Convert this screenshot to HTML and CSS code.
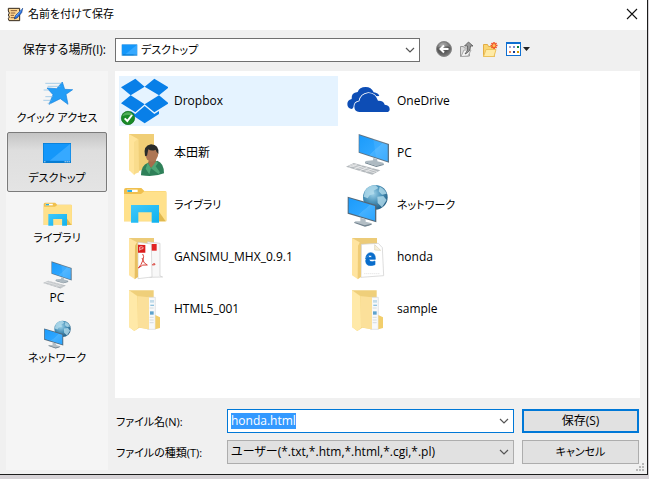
FILE: index.html
```html
<!DOCTYPE html>
<html lang="ja">
<head>
<meta charset="utf-8">
<title>名前を付けて保存</title>
<link rel="stylesheet" href="styles.css">
</head>
<body>
<svg class="defs" aria-hidden="true">
  <defs>
    <linearGradient id="blue" x1="0" y1="0" x2="1" y2="1">
      <stop offset="0" stop-color="#1b9bfb"/><stop offset=".55" stop-color="#2ea6ff"/><stop offset=".56" stop-color="#45b1ff"/><stop offset="1" stop-color="#2ba5ff"/>
    </linearGradient>
    <linearGradient id="yellow" x1="0" y1="0" x2="1" y2="0">
      <stop offset="0" stop-color="#f3d27b"/><stop offset="1" stop-color="#fde9a6"/>
    </linearGradient>
    <linearGradient id="cyan" x1="0" y1="0" x2="1" y2="1">
      <stop offset="0" stop-color="#41c8fa"/><stop offset="1" stop-color="#0fb2ee"/>
    </linearGradient>
    <radialGradient id="globe" cx=".4" cy=".35" r=".7">
      <stop offset="0" stop-color="#9fd3ea"/><stop offset=".5" stop-color="#4b93ba"/><stop offset="1" stop-color="#20597f"/>
    </radialGradient>
    <radialGradient id="grey" cx=".4" cy=".3" r=".8">
      <stop offset="0" stop-color="#999"/><stop offset=".5" stop-color="#555"/><stop offset="1" stop-color="#888"/>
    </radialGradient>
    <symbol id="i-pc" viewBox="9 177 144 144">
      <path d="M56 192l91 30v56l-91-30z" fill="#5e7486"/>
      <path d="M58 196l85 28v50l-85-28z" fill="url(#blue)"/>
      <path d="M98 196v0l45 28v50l-35-12z" fill="#fff" opacity=".08"/>
      <path d="M100 264l12 4v6l18 4 2 5-22 5-35-11 2-4 22-2z" fill="#aebac2"/>
      <path d="M75 277l34 11 22-6v3l-22 6-34-11z" fill="#728490"/>
      <path d="M41 279l80 22-24 13-79-24z" fill="#b4b9bd"/>
      <path d="M34 283l78 22M28 286l77 23M52 282l-26 10M67 287l-26 11M83 291l-25 12M98 295l-24 13" fill="none" stroke="#f4f4f4" stroke-width="2"/>
    </symbol>
    <symbol id="i-network" viewBox="9 3 144 144">
      <circle cx="106" cy="52" r="37" fill="url(#globe)"/>
      <path d="M75 32q14-18 32-16l8 8-14 8 2 10-14 4-6 9-12-5zM119 20q16 7 21 21l-14 3-10-10zM112 50l18-2 10 12-14 22-13-13z" fill="#b3dcec" opacity=".8"/>
      <path d="M23 50l86 25v52L23 101z" fill="#536879"/>
      <path d="M26 54l79 24v44L26 98z" fill="url(#blue)"/>
      <path d="M61 113l16 5v7l19 5-10 8-13 1-30-12 3-3h15z" fill="#b3bec5"/>
      <path d="M43 126l31 10 21-5v3l-20 6-32-11z" fill="#72838f"/>
    </symbol>
    <symbol id="i-library" viewBox="24 3 144 144">
      <path d="M36 31q0-7 6-7h46l9 9h62q4 0 4 5v86H36z" fill="#f0c04e"/>
      <path d="M45 29h32v7H45z" fill="#fff"/><path d="M46 30h14v6H46z" fill="#27aee8"/>
      <path d="M36 42h51l10-8h66v86q0 4-5 4H36z" fill="#ffe18b"/>
      <path d="M141 95l20 29h-20z" fill="#dfb850"/>
      <path d="M57 75h84v53h-22V97H79v31H57z" fill="url(#cyan)"/>
    </symbol>
    <symbol id="i-desktop" viewBox="130 223 88 64">
      <path d="M132 225h84v60h-84z" fill="#087dd2"/>
      <path d="M134 227h80v51h-80z" fill="#1497fa"/><path d="M214 227v51h-62z" fill="#36a9ff"/>
      <path d="M136 280h3v3h-3zM197 280h3v3h-3zM203 280h3v3h-3zM209 280h3v3h-3z" fill="#fff"/>
    </symbol>
    <symbol id="i-papers" viewBox="24 315 144 144">
      <path d="M51 331h74v110H67z" fill="#efcf7a"/>
      <path d="M106 352h24v96h-24z" fill="#f7f9fa" stroke="#d5dadd" stroke-width="2"/>
      <path d="M114 360h12v8h-12z" fill="#c3dcea"/><path d="M115 374h11v4h-11z" fill="#8fc1de"/><path d="M114 394h11v10h-11z" fill="#5fa3cd"/><path d="M113 412h12m-12 8h12m-12 8h12m-12-44h12" stroke="#c6ccd0" stroke-width="2"/>
      <path d="M130 405l14 7v32l-14 4z" fill="#f2ce6c"/>
      <path d="M51 331l28 18 32 3v96l-29-5-15 10-16-12z" fill="#f5d684"/>
      <path d="M51 331l25 18 2 95-11 9-16-12z" fill="#ffe9a8"/>
      <path d="M78 349l33 3v96l-33-6z" fill="#fbe09a"/>
    </symbol>
  </defs>
</svg>

<main class="dialog">
  <header class="titlebar">
    <svg class="app-icon" viewBox="21 18 51 48" aria-hidden="true">
      <path d="M25 25h34v37H27l-2-6 3-5-3-6 3-6-3-6z" fill="#ffd893" stroke="#33281e" stroke-width="3"/>
      <path d="M32 32h19M32 39h14M32 46h10M32 53h16" stroke="#8b5d35" stroke-width="3"/>
      <path d="M68 25l-3 13-14 16-8 3 3-10z" fill="#2d75e4" stroke="#123777" stroke-width="2"/>
      <path d="M66 27L48 49" stroke="#83bcff" stroke-width="2"/>
    </svg>
    <h1>名前を付けて保存</h1>
    <button class="close" aria-label="閉じる"><svg viewBox="0 0 12 12"><path d="M1 1l10 10M11 1L1 11" fill="none" stroke="#111" stroke-width="1.1"/></svg></button>
  </header>

  <div class="toolbar">
    <label for="place">保存する場所(I):</label>
    <div class="combo place">
      <svg viewBox="130 223 88 64" aria-hidden="true"><use href="#i-desktop" x="130" y="223" width="88" height="64"/></svg>
      <select id="place" class="kana"><option>デスクトップ</option></select>
      <svg class="chevron" viewBox="0 0 10 6" aria-hidden="true"><path d="M1 1l4 4 4-4"/></svg>
    </div>
    <div class="tools">
      <button aria-label="戻る"><svg viewBox="0 0 18 18">
        <circle cx="8" cy="8" r="7.500" fill="url(#grey)" stroke="#888"/>
        <path d="M2 6a6.200 6.200 0 0 1 12 0q-6-2-12 0z" fill="#fff" opacity=".25"/>
        <path d="M12.500 8H4.500M8 4.500L4.500 8 8 11.500" fill="none" stroke="#fff" stroke-width="2"/></svg></button>
      <button aria-label="上へ"><svg viewBox="0 0 18 18">
        <path d="M1.500 5.500h3l1 1.500h5v8l-9 .5z" fill="#ddd" stroke="#999"/>
        <path d="M2 15.500l3-6.500h7l-3 6z" fill="#f5f5f5" stroke="#aaa"/>
        <path d="M6 13q4-4 2.500-8H5.500l4-4 4.500 4h-2.500q0 6-5.500 8z" fill="#999" stroke="#555" stroke-width=".8"/></svg></button>
      <button aria-label="新しいフォルダー"><svg viewBox="0 0 18 18">
        <path d="M1.500 3.500h4l1 2h6v10h-11z" fill="#f9d572" stroke="#e3ad45"/>
        <path d="M1.500 15.500L4 8.500h10l-2 7z" fill="#ffeba6" stroke="#ecc25c"/>
        <path d="M12 1v7M8.500 4.500h7M9.500 2l5 5M14.500 2l-5 5" stroke="#f05023" stroke-width="1.500"/><circle cx="12" cy="4.500" r="1.500" fill="#ffc05c"/></svg></button>
      <button class="view" aria-label="表示"><svg viewBox="0 0 27 18">
        <path d="M1 1h15v14H1z" fill="#0f6fd1"/><path d="M2 3h13v11H2z" fill="#fff"/>
        <path d="M4 5h2v2H4z" fill="#a9a3c5"/><path d="M8 5h2v2H8z" fill="#7a8bd0"/><path d="M12 5h2v2h-2z" fill="#13823c"/><path d="M4 10h2v2H4z" fill="#ef8154"/><path d="M8 10h2v2H8z" fill="#123b92"/><path d="M12 10h2v2h-2z" fill="#d39a00"/>
        <path d="M18 6h7l-3.500 4z" fill="#222"/></svg></button>
    </div>
  </div>

  <nav class="places" aria-label="場所">
    <button><svg viewBox="123 30 96 96">
      <path d="M187 42l7 22 24 1-20 14 6 30-23-17-34 17 12-29-18-20 29 2z" fill="#249df6" stroke="#1684df" stroke-width="2"/>
      <path d="M136 46h49M143 55h38M131 66h16M136 86h23M130 97h25M143 106h10" stroke="#7fb8e1" stroke-width="2"/></svg><span class="kana">クイック アクセス</span></button>
    <button class="selected" aria-current="true"><svg viewBox="126 210 96 96"><use href="#i-desktop" x="130" y="223" width="88" height="64"/></svg><span class="kana">デスクトップ</span></button>
    <button><svg viewBox="24 3 144 144"><use href="#i-library" x="24" y="3" width="144" height="144"/></svg><span class="kana">ライブラリ</span></button>
    <button><svg viewBox="9 177 144 144"><use href="#i-pc" x="9" y="177" width="144" height="144"/></svg><span>PC</span></button>
    <button><svg viewBox="9 3 144 144"><use href="#i-network" x="9" y="3" width="144" height="144"/></svg><span class="kana">ネットワーク</span></button>
  </nav>

  <ul class="files">
    <li><button class="hot"><svg viewBox="24 21 144 144">
      <path d="M70 26l28 24-42 26-29-24zM127 26l43 26-29 24-43-26zM27 100l29-24 42 27-28 24zM141 76l29 24-43 27-29-24zM98 108l29 24 14-9v9l-43 28-42-28v-9l14 9z" fill="#087fe8"/>
      <circle cx="48" cy="144" r="20" fill="#198a27" stroke="#0c6b1b" stroke-width="2"/>
      <path d="M31 139a18 18 0 0 1 34 0q-17-8-34 0z" fill="#75c77b" opacity=".6"/>
      <path d="M38 145l8 8 14-18" fill="none" stroke="#fff" stroke-width="6"/></svg><span>Dropbox</span></button></li>
    <li><button><svg viewBox="9 21 144 144">
      <path d="M36 117q-14-2-14-15 0-12 13-15-2-19 18-21 5-15 24-15 17 0 24 16 14 2 17 11-50 0-82 39z" fill="#0d4db5"/>
      <path d="M58 126q-15-2-15-16 0-13 15-16 4-22 27-25 22 1 29 23 17-1 20 12 16 2 15 15-1 7-10 7z" fill="#0d4db5" stroke="#fff" stroke-width="5" paint-order="stroke"/></svg><span>OneDrive</span></button></li>
    <li><button><svg viewBox="24 177 144 144">
      <path d="M51 192h75v94l-59 22-16-8z" fill="#f0ce76"/><path d="M51 192l28 16v86l-12 22-16-16z" fill="#ffe49a"/><path d="M78 207l-12 9v97l15-6z" fill="#f9dc8c"/>
      <path d="M87 316q0-31 21-38l28-6q20 7 20 38-28 12-69 6z" fill="#2f8059"/>
      <path d="M112 267l19 1 2 10-16 17-9-17z" fill="#a66d4c"/><path d="M107 278l10 17-5 18-11-17zM133 273l-16 22 23 17 4-5-13-18 7-10z" fill="#4fa776"/>
      <ellipse cx="119" cy="250" rx="20" ry="25" fill="#ae7655"/>
      <path d="M99 258q-7-31 18-35 25 1 22 28-6-4-8-12-12 6-22-1l-4 19z" fill="#292b2a"/></svg><span>本田新</span></button></li>
    <li><button><svg><use href="#i-pc"/></svg><span>PC</span></button></li>
    <li><button><svg><use href="#i-library"/></svg><span class="kana">ライブラリ</span></button></li>
    <li><button><svg><use href="#i-network"/></svg><span class="kana">ネットワーク</span></button></li>
    <li><button><svg viewBox="24 159 144 144">
      <path d="M51 174h75v110H67z" fill="#eccb78"/>
      <path d="M106 185l38 5v98l8 3-39 1z" fill="#f8f8f8" stroke="#ccc" stroke-width="2"/><path d="M112 192h22v20h-22z" fill="#e22525"/>
      <path d="M78 187l40 5 2 99-42 5z" fill="#fff" stroke="#ccc" stroke-width="2"/><path d="M78 194l22 1v23H78z" fill="#dc1d1d"/><path d="M83 212v-11q12-3 10 5l-9 2" fill="none" stroke="#fff" stroke-width="2"/>
      <path d="M92 222q5 5 1 18-5 15-14 24 13-13 27-9-10-2-16-21M121 254q8-7 8 0l-8 1" fill="none" stroke="#d9423a" stroke-width="3"/>
      <path d="M51 174l24 13 2 96-8 15-18-12z" fill="#ffe4a0"/><path d="M75 187l3 104-10 7 1-101z" fill="#e7bf61"/></svg><span>GANSIMU_MHX_0.9.1</span></button></li>
    <li><button><svg viewBox="9 159 144 144">
      <path d="M36 174h75v110H52z" fill="#eccb78"/>
      <path d="M64 193l51-3 12 13 4 84-68 5z" fill="#fff" stroke="#ccc" stroke-width="2"/>
      <path d="M104 194v16l18 1z" fill="#f8f1dc" stroke="#d8d0b8" stroke-width="2"/>
      <path d="M77 237q1-18 15-19 15 1 14 20H87q2 11 18 5v11q-27 9-28-11 0-10 10-16-2 3-2 5h11q-1-7-7-6-7 0-12 11z" fill="#096dcb" stroke="#096dcb" stroke-width="2"/>
      <path d="M73 281h46" stroke="#ddd" stroke-width="3" stroke-dasharray="3"/>
      <path d="M36 174l23 13 3 94-8 17-18-12z" fill="#ffe4a0"/><path d="M60 187l3 104-10 7 1-101z" fill="#f0cc76"/></svg><span>honda</span></button></li>
    <li><button><svg><use href="#i-papers"/></svg><span>HTML5_001</span></button></li>
    <li><button><svg><use href="#i-papers"/></svg><span>sample</span></button></li>
  </ul>

  <form class="form">
    <label class="kana" for="name">ファイル名(N):</label>
    <div class="combo name">
      <input id="name" type="text" value="honda.html" spellcheck="false" autocomplete="off">
      <svg class="chevron" viewBox="0 0 10 6" aria-hidden="true"><path d="M1 1l4 4 4-4"/></svg>
    </div>
    <button class="action primary" type="button">保存(S)</button>
    <label class="kana" for="type">ファイルの種類(T):</label>
    <div class="combo type">
      <select id="type"><option>ユーザー(*.txt,*.htm,*.html,*.cgi,*.pl)</option></select>
      <svg class="chevron" viewBox="0 0 10 6" aria-hidden="true"><path d="M1 1l4 4 4-4"/></svg>
    </div>
    <button class="action kana" type="button">キャンセル</button>
  </form>
  <svg class="grip" viewBox="0 0 9 9" aria-hidden="true"><path d="M6 0h2v2H6zM3 3h2v2H3zM6 3h2v2H6zM0 6h2v2H0zM3 6h2v2H3zM6 6h2v2H6z" fill="#b8b8b8"/></svg>
</main>
<script src="script.js"></script>
</body>
</html>
```

FILE: styles.css
```css
* { box-sizing: border-box; }

body {
  margin: 0;
  min-height: 100vh;
  display: flex;
  padding: 0 1px 4px 0;
  background: #d6d2d6;
  color: #000;
  font: 12px/16px "Open Sans", "Noto Sans CJK JP", sans-serif;
  font-feature-settings: "palt";
}

button, input, select {
  font: inherit;
  font-feature-settings: inherit;
  color: inherit;
  margin: 0;
  padding: 0;
  border: 0;
  background: none;
  border-radius: 0;
  outline: 0;
}

.kana { font-size: 11px; }

.defs { position: absolute; width: 0; height: 0; }

.dialog {
  position: relative;
  flex: 1;
  display: grid;
  grid-template-columns: 102px 1fr;
  grid-template-rows: 30px 41px 1fr auto;
  column-gap: 7px;
  padding: 0 7px 4px 6px;
  background: #f0f0f0;
  border: solid #1c1c1c;
  border-width: 0 1px 1px 0;
}

.titlebar {
  grid-column: 1 / -1;
  display: flex;
  align-items: center;
  gap: 4px;
  margin: 0 -7px 0 -6px;
  padding: 0 9px 2px 7px;
  background: #fff;
}
.titlebar h1 { flex: 1; margin: 0; font-size: 11px; font-weight: 400; }
.app-icon { width: 17px; height: 16px; }
.close { display: flex; }
.close svg { width: 12px; height: 12px; }

.toolbar {
  grid-column: 1 / -1;
  display: grid;
  grid-template-columns: 102px 305px 1fr;
  column-gap: 7px;
  align-items: center;
  padding-bottom: 1px;
}
.toolbar label { padding-right: 2px; text-align: right; }

.combo {
  display: flex;
  align-items: center;
  height: 24px;
  padding: 0 4px 0 3px;
  background: #fff;
  border: 1px solid #707070;
}
.combo select, .combo input { flex: 1; min-width: 0; appearance: none; }
.chevron { width: 10px; height: 6px; flex: none; pointer-events: none; }
.chevron path { fill: none; stroke: #555; stroke-width: 1.2; }
.place { gap: 3px; padding-left: 5px; }
.place > svg:first-child { width: 17px; height: 12px; }

.tools { display: flex; align-items: center; gap: 5px; padding-left: 9px; }
.tools button { display: flex; }
.tools svg { width: 18px; height: 18px; }
.tools .view svg { width: 27px; }

.places {
  grid-row: 3 / 5;
  display: flex;
  flex-direction: column;
  padding: 1px 1px 0;
  background: #f5f5f5;
}
.places button {
  display: flex;
  flex-direction: column;
  align-items: center;
  height: 60px;
  padding-top: 5px;
  border: 1px solid transparent;
  white-space: nowrap;
}
.places span { line-height: 16px; }
.places svg { width: 32px; height: 32px; }
.places .selected {
  border: 1px solid #7b7b7b;
  border-radius: 2px;
  background: linear-gradient(#c4c4c4, #dedede 30%, #e4e4e4);
}

.files {
  display: grid;
  grid-template-columns: repeat(auto-fill, 219px);
  grid-auto-rows: 50px;
  align-content: start;
  gap: 2px 4px;
  margin: 0;
  padding: 5px 4px;
  list-style: none;
  background: #fff;
}
.files button {
  display: flex;
  align-items: center;
  gap: 6px;
  width: 100%;
  height: 50px;
  padding-left: 1px;
  text-align: left;
}
.files svg { width: 48px; height: 48px; }
.files .hot { background: #e5f3ff; }

.form {
  display: grid;
  grid-template-columns: 105px 1fr 117px;
  gap: 7px 8px;
  align-items: center;
  padding: 11px 1px 6px 0;
}
.form label { padding: 2px 0 0 1px; }
.form .combo { margin-left: -1px; }
.form .name { border-color: #0078d7; }
.name input::selection { background: #3399ff; color: #fff; }
.form .type { background: #e1e1e1; border-color: #adadad; }
.action { height: 24px; background: #e1e1e1; border: 1px solid #adadad; }
.primary { border: 2px solid #0078d7; }

.grip { position: absolute; right: 2px; bottom: 2px; width: 9px; height: 9px; }
```

FILE: script.js
```js
const nameField = document.getElementById("name");
nameField.focus();
nameField.select();
```
